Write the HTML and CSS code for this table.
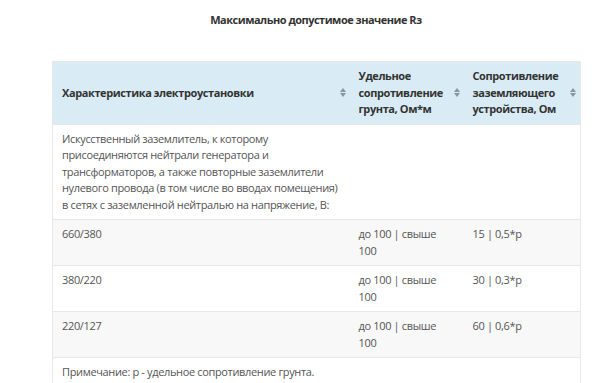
FILE: index.html
```html
<!DOCTYPE html>
<html lang="ru">
<head>
<meta charset="utf-8">
<title>Максимально допустимое значение Rз</title>
<link rel="stylesheet" href="styles.css">
</head>
<body>
<div class="page">
  <h3 class="title">Максимально допустимое значение Rз</h3>
  <table class="grid">
    <colgroup>
      <col class="col-a">
      <col class="col-b">
      <col class="col-c">
    </colgroup>
    <thead>
      <tr>
        <th><div class="th-in"><span>Характеристика электроустановки</span><i class="sort"></i></div></th>
        <th><div class="th-in"><span>Удельное<br>сопротивление<br>грунта, Ом*м</span><i class="sort"></i></div></th>
        <th><div class="th-in"><span>Сопротивление<br>заземляющего<br>устройства, Ом</span><i class="sort"></i></div></th>
      </tr>
    </thead>
    <tbody>
      <tr>
        <td>Искусственный заземлитель, к которому<br>присоединяются нейтрали генератора и<br>трансформаторов, а также повторные заземлители<br>нулевого провода (в том числе во вводах помещения)<br>в сетях с заземленной нейтралью на напряжение, В:</td>
        <td></td>
        <td></td>
      </tr>
      <tr class="alt">
        <td>660/380</td>
        <td>до 100 | свыше<br>100</td>
        <td>15 | 0,5*р</td>
      </tr>
      <tr>
        <td>380/220</td>
        <td>до 100 | свыше<br>100</td>
        <td>30 | 0,3*р</td>
      </tr>
      <tr class="alt">
        <td>220/127</td>
        <td>до 100 | свыше<br>100</td>
        <td>60 | 0,6*р</td>
      </tr>
      <tr>
        <td colspan="3">Примечание: р - удельное сопротивление грунта.</td>
      </tr>
    </tbody>
  </table>
</div>
</body>
</html>
```

FILE: styles.css
```css
html, body {
  margin: 0;
  padding: 0;
  background: #ffffff;
}

.page {
  width: 528px;
  margin-left: 52px;
  padding-top: 12px;
  font-family: "Open Sans", "Noto Sans", sans-serif;
  font-size: 11px;
  color: #555555;
}

.title {
  margin: 0 0 34px 0;
  text-align: center;
  font-size: 11px;
  line-height: 15px;
  font-weight: 700;
  letter-spacing: -0.5px;
  color: #333333;
}

.grid {
  width: 528px;
  border-collapse: collapse;
  table-layout: fixed;
  border: 1px solid #e8e8e8;
}

.col-a { width: 297px; }
.col-b { width: 114px; }
.col-c { width: 117px; }

.grid th {
  background: #d9ecf5;
  color: #333333;
  font-weight: 700;
  text-align: left;
  padding: 6px 4px 6px 9px;
  line-height: 16.5px;
  letter-spacing: -0.4px;
  vertical-align: middle;
}

.th-in {
  display: flex;
  align-items: center;
  justify-content: space-between;
  gap: 4px;
}

.sort {
  flex: none;
  width: 6px;
  height: 9px;
  display: flex;
  flex-direction: column;
  justify-content: space-between;
  align-items: center;
}

.sort::before,
.sort::after {
  content: "";
  width: 0;
  height: 0;
  border-left: 3px solid transparent;
  border-right: 3px solid transparent;
}

.sort::before {
  border-bottom: 4px solid #8a959c;
}

.sort::after {
  border-top: 4px solid #8a959c;
}

.grid td {
  padding: 6px 9px;
  line-height: 16.5px;
  letter-spacing: -0.35px;
  vertical-align: top;
  border-top: 1px solid #e8e8e8;
  white-space: nowrap;
}

.grid tr.alt td {
  background: #f8f8f8;
}
```
